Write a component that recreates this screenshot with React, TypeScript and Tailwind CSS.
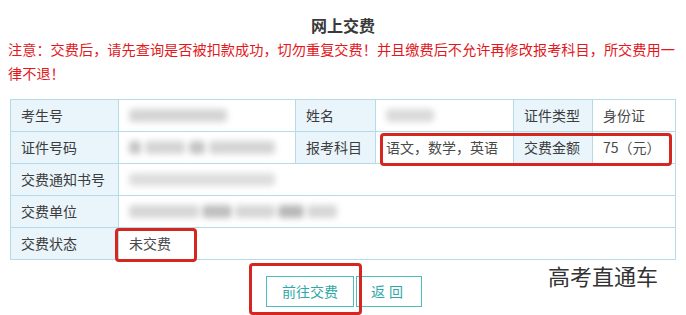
import React from "react";

const font = { fontFamily: '"Noto Sans CJK SC", "Noto Sans", sans-serif' };

function Blur({ w, tone = "bg-[#d4d4d4]" }: { w: string; tone?: string }) {
  return <div className={`h-[13px] ${w} ${tone} blur-[3px] rounded-sm`} />;
}

const label = "bg-[#e9f5fb] border border-[#b5dbe9] px-[10px] h-[32px] text-[14px] text-[#3c3c3c] font-normal text-left whitespace-nowrap";
const cell = "border border-[#b5dbe9] px-[10px] h-[32px] text-[14px] text-[#4a4a4a] text-left whitespace-nowrap";

export default function App() {
  return (
    <div className="relative w-[686px] h-[315px] overflow-hidden bg-white" style={font}>
      <h1 className="pt-[13px] text-center text-[16px] leading-[24px] font-bold text-[#3a3a3a]">网上交费</h1>
      <p className="px-[8px] text-[14.2px] leading-[24px] text-[#e2181d]">
        注意：交费后，请先查询是否被扣款成功，切勿重复交费！并且缴费后不允许再修改报考科目，所交费用一律不退！
      </p>

      <table className="mt-[14px] ml-[10px] w-[665px] border-collapse table-fixed">
        <colgroup>
          <col className="w-[108px]" />
          <col className="w-[177px]" />
          <col className="w-[80px]" />
          <col className="w-[138px]" />
          <col className="w-[79px]" />
          <col className="w-[83px]" />
        </colgroup>
        <tbody>
          <tr>
            <th className={label}>考生号</th>
            <td className={cell}><Blur w="w-[98px]" /></td>
            <th className={label}>姓名</th>
            <td className={cell}><Blur w="w-[48px]" tone="bg-[#dadada]" /></td>
            <th className={label}>证件类型</th>
            <td className={cell}>身份证</td>
          </tr>
          <tr>
            <th className={label}>证件号码</th>
            <td className={cell}>
              <div className="flex gap-[4px]">
                <Blur w="w-[12px]" tone="bg-[#c4c4c4]" />
                <Blur w="w-[40px]" />
                <Blur w="w-[16px]" tone="bg-[#c4c4c4]" />
                <Blur w="w-[66px]" />
              </div>
            </td>
            <th className={label}>报考科目</th>
            <td className={cell}>语文，数学，英语</td>
            <th className={label}>交费金额</th>
            <td className={cell}>75（元）</td>
          </tr>
          <tr>
            <th className={label}>交费通知书号</th>
            <td className={cell} colSpan={5}><Blur w="w-[146px]" tone="bg-[#dedede]" /></td>
          </tr>
          <tr>
            <th className={label}>交费单位</th>
            <td className={cell} colSpan={5}>
              <div className="flex gap-[3px]">
                <Blur w="w-[70px]" tone="bg-[#d6d6d6]" />
                <Blur w="w-[30px]" tone="bg-[#bfbfbf]" />
                <Blur w="w-[40px]" tone="bg-[#d6d6d6]" />
                <Blur w="w-[26px]" tone="bg-[#b8b8b8]" />
                <Blur w="w-[30px]" tone="bg-[#d6d6d6]" />
              </div>
            </td>
          </tr>
          <tr>
            <th className={label}>交费状态</th>
            <td className={cell} colSpan={5}>未交费</td>
          </tr>
        </tbody>
      </table>

      <div className="mt-[16px] flex justify-center gap-[2px] pl-[2px]">
        <button className="w-[88px] h-[31px] border border-[#4cbdb8] text-[14px] text-[#2fa8a6] bg-white">前往交费</button>
        <button className="w-[66px] h-[31px] border border-[#4cbdb8] text-[14px] text-[#2fa8a6] bg-white tracking-[4px]">返回</button>
      </div>

      {/* annotations */}
      <div className="absolute left-[380px] top-[133px] w-[292px] h-[33px] border-[3px] border-[#d4271f] rounded-[4px]" />
      <div className="absolute left-[115px] top-[228px] w-[82px] h-[34px] border-[3px] border-[#d4271f] rounded-[4px]" />
      <div className="absolute left-[249px] top-[263px] w-[113px] h-[52px] border-[3px] border-[#d4271f] rounded-[4px]" />

      <div className="absolute left-[548px] top-[261px] text-[22px] leading-[28px] text-[#333]">高考直通车</div>
    </div>
  );
}
